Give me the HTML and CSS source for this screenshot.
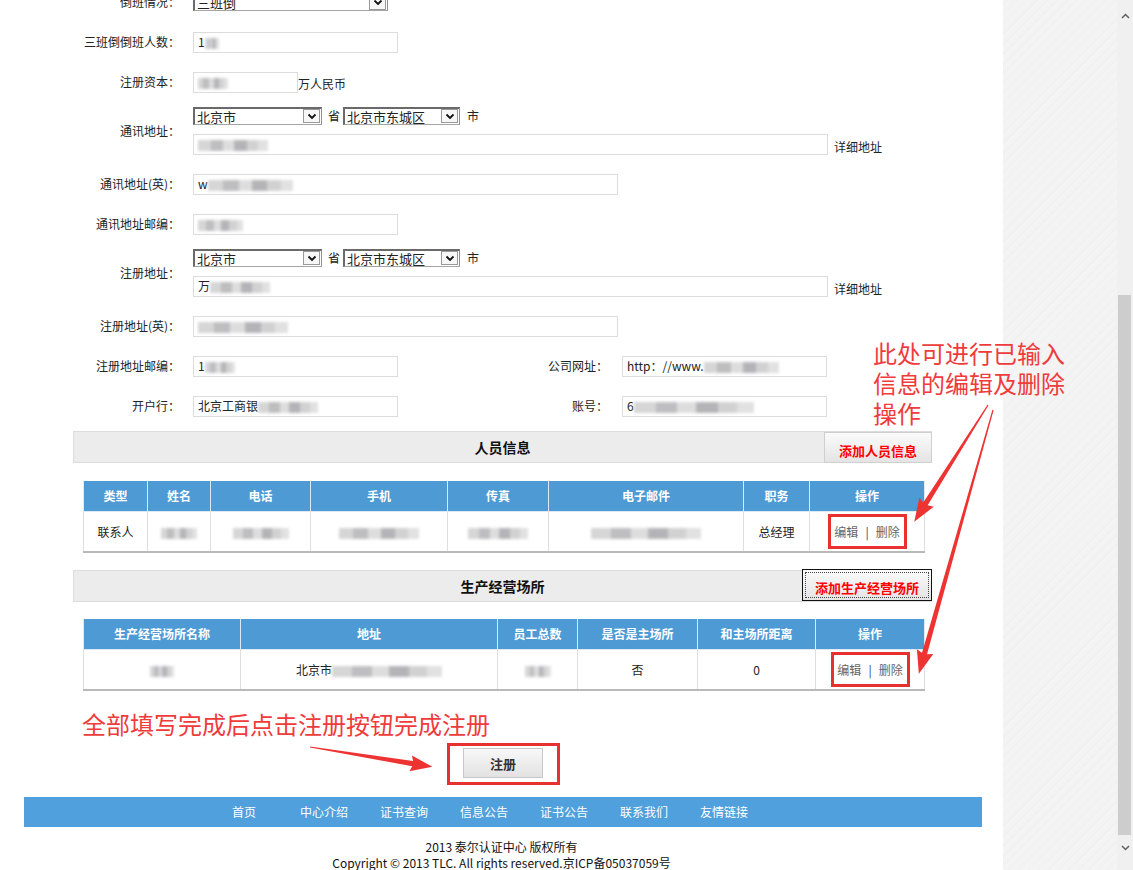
FILE: index.html
```html
<!DOCTYPE html>
<html lang="zh-CN">
<head>
    <meta charset="UTF-8">
    <meta name="viewport" content="width=device-width, initial-scale=1.0">
    <title>企业注册</title>
    <link rel="stylesheet" href="styles.css">
</head>
<body>
<div class="screen">
    <div class="page">
        <div class="sheet">
            <div class="form">
                <div class="row">
                    <span class="lbl">倒班情况：</span>
                    <span class="select s195"><span class="opt">三班倒</span><span class="arrow"><svg width="10" height="7" viewBox="0 0 10 7"><path d="M1.5 1.5 L5 5 L8.5 1.5"/></svg></span></span>
                </div>
                <div class="row">
                    <span class="lbl">三班倒倒班人数：</span>
                    <div class="field w205">1<span class="blur b14"></span></div>
                </div>
                <div class="row">
                    <span class="lbl">注册资本：</span>
                    <div class="field w105"><span class="blur b30"></span></div>
                    <span class="unit">万人民币</span>
                </div>
                <div class="row addr">
                    <span class="lbl">通讯地址：</span>
                    <div class="addr-box">
                        <div class="addr-line">
                            <span class="select s129"><span class="opt">北京市</span><span class="arrow"><svg width="10" height="7" viewBox="0 0 10 7"><path d="M1.5 1.5 L5 5 L8.5 1.5"/></svg></span></span>
                            <span class="unit gap6 sep">省</span>
                            <span class="select s117"><span class="opt">北京市东城区</span><span class="arrow"><svg width="10" height="7" viewBox="0 0 10 7"><path d="M1.5 1.5 L5 5 L8.5 1.5"/></svg></span></span>
                            <span class="unit gap7">市</span>
                        </div>
                        <div class="addr-line end">
                            <div class="field w635"><span class="blur b70"></span></div>
                            <span class="unit gap6">详细地址</span>
                        </div>
                    </div>
                </div>
                <div class="row">
                    <span class="lbl">通讯地址(英)：</span>
                    <div class="field w425">w<span class="blur b85"></span></div>
                </div>
                <div class="row">
                    <span class="lbl">通讯地址邮编：</span>
                    <div class="field w205"><span class="blur b45"></span></div>
                </div>
                <div class="row addr">
                    <span class="lbl">注册地址：</span>
                    <div class="addr-box">
                        <div class="addr-line">
                            <span class="select s129"><span class="opt">北京市</span><span class="arrow"><svg width="10" height="7" viewBox="0 0 10 7"><path d="M1.5 1.5 L5 5 L8.5 1.5"/></svg></span></span>
                            <span class="unit gap6 sep">省</span>
                            <span class="select s117"><span class="opt">北京市东城区</span><span class="arrow"><svg width="10" height="7" viewBox="0 0 10 7"><path d="M1.5 1.5 L5 5 L8.5 1.5"/></svg></span></span>
                            <span class="unit gap7">市</span>
                        </div>
                        <div class="addr-line end">
                            <div class="field w635">万<span class="blur b60"></span></div>
                            <span class="unit gap6">详细地址</span>
                        </div>
                    </div>
                </div>
                <div class="row">
                    <span class="lbl">注册地址(英)：</span>
                    <div class="field w425"><span class="blur b90"></span></div>
                </div>
                <div class="row">
                    <span class="lbl">注册地址邮编：</span>
                    <div class="field w205">1<span class="blur b30"></span></div>
                    <span class="lbl2">公司网址：</span>
                    <div class="field w205">http：//www.<span class="blur b75"></span></div>
                </div>
                <div class="row">
                    <span class="lbl">开户行：</span>
                    <div class="field w205">北京工商银<span class="blur b60"></span></div>
                    <span class="lbl2">账号：</span>
                    <div class="field w205">6<span class="blur b120"></span></div>
                </div>
            </div>

            <div class="section-bar first">人员信息
                <button type="button" class="add-btn">添加人员信息</button>
            </div>
            <table class="grid">
                <colgroup>
                    <col style="width:64px"><col style="width:63px"><col style="width:100px"><col style="width:137px">
                    <col style="width:101px"><col style="width:195px"><col style="width:66px"><col style="width:115px">
                </colgroup>
                <tr>
                    <th>类型</th><th>姓名</th><th>电话</th><th>手机</th><th>传真</th><th>电子邮件</th><th>职务</th><th>操作</th>
                </tr>
                <tr>
                    <td>联系人</td>
                    <td><span class="blur b36"></span></td>
                    <td><span class="blur b56"></span></td>
                    <td><span class="blur b80"></span></td>
                    <td><span class="blur b60"></span></td>
                    <td><span class="blur b110"></span></td>
                    <td>总经理</td>
                    <td><span class="mark"><a href="#">编辑</a><i>|</i><a href="#">删除</a></span></td>
                </tr>
            </table>

            <div class="section-bar">生产经营场所
                <button type="button" class="add-btn focused">添加生产经营场所</button>
            </div>
            <table class="grid">
                <colgroup>
                    <col style="width:157px"><col style="width:257px"><col style="width:80px">
                    <col style="width:120px"><col style="width:118px"><col style="width:109px">
                </colgroup>
                <tr>
                    <th>生产经营场所名称</th><th>地址</th><th>员工总数</th><th>是否是主场所</th><th>和主场所距离</th><th>操作</th>
                </tr>
                <tr>
                    <td><span class="blur b24"></span></td>
                    <td>北京市<span class="blur b110"></span></td>
                    <td><span class="blur b26"></span></td>
                    <td>否</td>
                    <td>0</td>
                    <td><span class="mark"><a href="#">编辑</a><i>|</i><a href="#">删除</a></span></td>
                </tr>
            </table>

            <p class="tip">全部填写完成后点击注册按钮完成注册</p>
            <div class="submit-row">
                <span class="mark-box"><button type="button" class="submit">注册</button></span>
            </div>

            <div class="footer-nav">
                <a href="#">首页</a>
                <a href="#">中心介绍</a>
                <a href="#">证书查询</a>
                <a href="#">信息公告</a>
                <a href="#">证书公告</a>
                <a href="#">联系我们</a>
                <a href="#">友情链接</a>
            </div>
            <div class="copyright">
                <p>2013 泰尔认证中心 版权所有</p>
                <p>Copyright © 2013 TLC. All rights reserved.京ICP备05037059号</p>
            </div>
        </div>
        <div class="side"></div>

        <div class="note">此处可进行已输入<br>信息的编辑及删除<br>操作</div>
        <svg class="arrows" width="1117" height="870" viewBox="0 0 1117 870">
            <path transform="translate(988 405) rotate(122.3)" d="M0 -0.6 L117 -2.6 L115 -8.5 L138 0 L115 8.5 L117 2.6 L0 0.6 Z"/>
            <path transform="translate(993 410) rotate(105.7)" d="M0 -0.6 L253 -2.6 L251 -8.5 L274 0 L251 8.5 L253 2.6 L0 0.6 Z"/>
            <path transform="translate(310 747) rotate(9.2)" d="M0 -0.6 L104 -2.6 L102 -8 L124 0 L102 8 L104 2.6 L0 0.6 Z"/>
        </svg>
    </div>

    <div class="scrollbar">
        <div class="sb-up"><svg width="9" height="6" viewBox="0 0 9 6"><path d="M1 5 L4.5 1.5 L8 5"/></svg></div>
        <div class="sb-gap"></div>
        <div class="sb-thumb"></div>
        <div class="sb-down"><svg width="9" height="6" viewBox="0 0 9 6"><path d="M1 1 L4.5 4.5 L8 1"/></svg></div>
    </div>
</div>
</body>
</html>
```

FILE: styles.css
```css
*{
    margin: 0;
    padding: 0;
    box-sizing: border-box;
}
body{
    overflow: hidden;
    font-family: "Noto Sans CJK SC", "Liberation Sans", sans-serif;
    font-size: 12px;
    color: #222;
}
.screen{
    display: flex;
    height: 870px;
    overflow: hidden;
}
.page{
    position: relative;
    display: flex;
    width: 1117px;
    overflow: hidden;
}
.sheet{
    width: 1003px;
    flex-shrink: 0;
    background-color: #fff;
}
.side{
    flex: 1;
    background: repeating-linear-gradient(135deg, #f3f3f3 0 3px, #f0f0f0 3px 4px, #f4f4f4 4px 7px);
}

/* form rows */
.form{
    margin-top: -18px;
}
.row{
    display: flex;
    align-items: center;
    height: 40px;
}
.row.addr{
    height: 62px;
    padding-bottom: 5px;
}
.lbl{
    width: 180px;
    flex-shrink: 0;
    margin-right: 13px;
    text-align: right;
    line-height: 16px;
}
.lbl2{
    width: 210px;
    margin-right: 14px;
    text-align: right;
    line-height: 16px;
}
.field{
    height: 21px;
    border: 1px solid #dcdcdc;
    padding: 0 4px;
    line-height: 17px;
    white-space: nowrap;
    overflow: hidden;
    background: #fff;
}
.w105{ width: 105px; }
.w205{ width: 205px; }
.w425{ width: 425px; }
.w635{ width: 635px; }
.unit{
    line-height: 16px;
    padding-top: 4px;
}
.gap6{ margin-left: 6px; }
.gap7{ margin-left: 7px; }
.sep{ margin-right: 3px; }
.addr-box{
    display: flex;
    flex-direction: column;
    gap: 9px;
}
.addr-line{
    display: flex;
    align-items: center;
}
.addr-line.end{
    align-items: flex-end;
}
.addr-line .unit{
    padding-top: 0;
    font-size: 12px;
}
.select{
    display: inline-flex;
    align-items: center;
    height: 18px;
    border-style: solid;
    border-color: #6a6a6a #8f8f8f #a5a5a5 #6a6a6a;
    border-width: 2px 1px 1px 2px;
    background: #fff;
    font-size: 13px;
}
.s195{ width: 195px; }
.s129{ width: 129px; }
.s117{ width: 117px; }
.select .opt{
    flex: 1;
    padding-left: 2px;
    line-height: 15px;
    white-space: nowrap;
}
.select .arrow{
    display: flex;
    align-items: center;
    justify-content: center;
    width: 17px;
    height: 14px;
    margin-right: 1px;
    border: 1px solid #9a9a9a;
    background: #f7f7f7;
}
.select .arrow path{
    fill: none;
    stroke: #111;
    stroke-width: 1.8;
}

/* blurred values */
.blur{
    display: inline-block;
    height: 11px;
    vertical-align: middle;
    background: linear-gradient(90deg, #cfcfcf 0 18%, #b3b3b6 18% 36%, #d8d8d8 36% 52%, #a8a8ac 52% 70%, #cacaca 70% 86%, #dcdcdc 86%);
    filter: blur(1.6px);
    opacity: .85;
}
.b14{ width: 14px; }
.b24{ width: 24px; }
.b26{ width: 26px; }
.b30{ width: 30px; }
.b36{ width: 36px; }
.b45{ width: 45px; }
.b56{ width: 56px; }
.b60{ width: 60px; }
.b70{ width: 70px; }
.b75{ width: 75px; }
.b80{ width: 80px; }
.b85{ width: 85px; }
.b90{ width: 90px; }
.b110{ width: 110px; }
.b120{ width: 120px; }

/* sections */
.section-bar{
    position: relative;
    width: 859px;
    height: 32px;
    margin: 17px 0 0 73px;
    border: 1px solid #dcdcdc;
    background-color: #ececec;
    text-align: center;
    font-size: 14px;
    font-weight: bold;
    line-height: 31px;
    color: #111;
}
.section-bar.first{
    margin-top: 5px;
}
.add-btn{
    position: absolute;
    top: 0;
    right: -1px;
    width: 108px;
    height: 31px;
    padding-top: 6px;
    border: 1px solid #cfcfcf;
    background: linear-gradient(#fbfbfb, #e4e4e4);
    font-family: inherit;
    font-size: 13px;
    font-weight: bold;
    color: #f00;
    cursor: pointer;
}
.add-btn.focused{
    top: -2px;
    width: 130px;
    height: 32px;
    padding-top: 4px;
    border-color: #111;
    outline: 1px dotted #444;
    outline-offset: -4px;
}
.grid{
    width: 841px;
    margin: 17px 0 0 83px;
    border-collapse: collapse;
    table-layout: fixed;
    border-right: 1px solid #b3b3b3;
    border-bottom: 2px solid #b9b9b9;
}
.section-bar.first + .grid{
    margin-top: 18px;
}
.grid th{
    height: 30px;
    background-color: #4d9ad5;
    border: 1px solid #dde9f4;
    border-top: 0;
    color: #fff;
    font-weight: bold;
    font-size: 12px;
}
.grid td{
    height: 41px;
    border: 1px solid #dedede;
    text-align: center;
}
.mark{
    display: inline-block;
    width: 79px;
    height: 35px;
    border: 3px solid #e8312f;
    line-height: 29px;
    white-space: nowrap;
}
.mark a{
    color: #666;
    text-decoration: none;
}
.mark i{
    font-style: normal;
    color: #1d3a74;
    margin: 0 7px;
}

/* bottom */
.tip{
    margin: 18px 0 0 82px;
    font-size: 24px;
    line-height: 30px;
    color: #ef3b3b;
}
.submit-row{
    padding: 4px 0 0 447px;
}
.mark-box{
    display: inline-block;
    border: 3px solid #e8312f;
    padding: 2px 14px 4px 13px;
}
.submit{
    display: block;
    width: 80px;
    height: 30px;
    border: 1px solid #c8c8c8;
    background: linear-gradient(#f8f8f8, #e2e2e2);
    font-family: inherit;
    font-size: 13px;
    font-weight: bold;
    color: #333;
}
.footer-nav{
    display: flex;
    width: 958px;
    height: 30px;
    margin: 12px 0 0 24px;
    padding-left: 180px;
    background-color: #4fa0dc;
}
.footer-nav a{
    width: 80px;
    text-align: center;
    line-height: 30px;
    color: #fff;
    text-decoration: none;
}
.copyright{
    width: 1003px;
    padding-top: 12px;
    text-align: center;
    line-height: 16px;
    color: #111;
}

/* annotations */
.note{
    position: absolute;
    top: 338px;
    left: 873px;
    font-size: 24px;
    line-height: 30px;
    color: #ef3b3b;
    white-space: nowrap;
}
.arrows{
    position: absolute;
    top: 0;
    left: 0;
    pointer-events: none;
}
.arrows path{
    fill: #ee3333;
}

/* fake window scrollbar */
.scrollbar{
    display: flex;
    flex-direction: column;
    width: 16px;
    background-color: #f0f0f0;
}
.sb-up{
    height: 32px;
    display: flex;
    align-items: flex-end;
    justify-content: center;
    padding-bottom: 13px;
}
.sb-gap{
    height: 263px;
}
.sb-thumb{
    height: 540px;
    width: 13px;
    margin-left: 1px;
    background-color: #cdcdcd;
}
.sb-down{
    flex: 1;
    display: flex;
    justify-content: center;
    padding-top: 10px;
}
.scrollbar path{
    fill: none;
    stroke: #606060;
    stroke-width: 1.5;
}
```
